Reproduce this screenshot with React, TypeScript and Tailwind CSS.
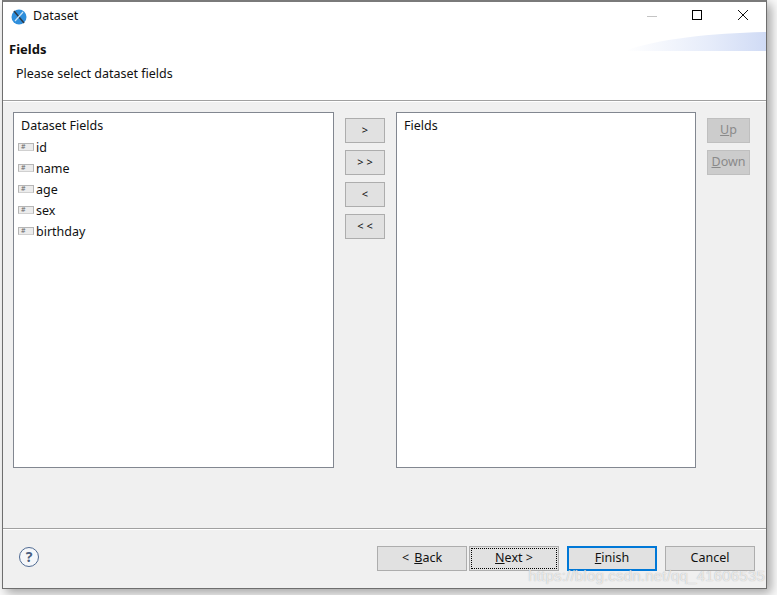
const font = { fontFamily: '"Noto Sans", "Open Sans", sans-serif' }

function Btn({ children, className = '' }: { children: React.ReactNode; className?: string }) {
  return (
    <div className={`flex items-center justify-center border border-[#adadad] bg-[#e1e1e1] text-[#111] ${className}`}>
      {children}
    </div>
  )
}

function FieldIcon() {
  return (
    <div className="h-[8px] w-[16px] shrink-0 border border-[#b5b5b5] bg-[#ececec] border-b-[#d0d0d0] text-[7px] leading-[6px] pl-[2px] text-[#666] mt-[-4px]">
      #
    </div>
  )
}

const fields = ['id', 'name', 'age', 'sex', 'birthday']

export default function App() {
  return (
    <div className="h-[595px] w-[777px] overflow-hidden bg-[#fafafa] text-[13px]" style={font}>
      <div className="ml-[2px] flex h-[589px] w-[765px] flex-col border border-t-2 border-[#6e6e6e] border-t-[#7a7a7a] bg-[#f0f0f0] text-[#111] shadow-[4px_4px_10px_rgba(0,0,0,0.35)]">
        {/* title bar */}
        <div className="relative h-[98px] shrink-0 bg-white">
          <div className="flex h-[29px] items-center pl-[8px]">
            <svg width="16" height="16" viewBox="0 0 16 16" className="shrink-0">
              <circle cx="8" cy="8" r="7.5" fill="#2f8fdc" />
              <path d="M3 2 L13 14" stroke="#2b3a4a" strokeWidth="1.6" />
              <path d="M12 3 L4 12" stroke="#cfe6f7" strokeWidth="1.2" />
            </svg>
            <span className="ml-[6px] text-[12.5px]">Dataset</span>
          </div>
          <div className="pl-[6px] pt-[9px] text-[13px] font-bold leading-[18px]">Fields</div>
          <div className="pl-[13px] pt-[7px] text-[12.5px] leading-[18px]">Please select dataset fields</div>

          {/* window buttons */}
          <div className="absolute left-[644px] top-[14px] h-px w-[10px] bg-[#c4c4c4]" />
          <div className="absolute left-[689px] top-[8px] h-[10px] w-[10px] border border-black" />
          <svg className="absolute left-[734px] top-[7px]" width="12" height="12" viewBox="0 0 12 12">
            <path d="M1 1 L11 11 M11 1 L1 11" stroke="#111" strokeWidth="1" />
          </svg>

          {/* banner swoosh */}
          <svg className="absolute right-0 top-[29px]" width="141" height="22" viewBox="0 0 141 22">
            <defs>
              <linearGradient id="swoosh" x1="0" x2="1" y1="0" y2="0">
                <stop offset="0" stopColor="#ffffff" />
                <stop offset="0.6" stopColor="#e6ecfa" />
                <stop offset="1" stopColor="#d0dbf5" />
              </linearGradient>
            </defs>
            <path d="M0 20 C30 8 90 2 141 1 L141 20 Z" fill="url(#swoosh)" />
          </svg>
        </div>

        <div className="h-[2px] shrink-0 border-t border-[#a0a0a0] bg-white" />

        {/* body */}
        <div className="flex flex-1 pl-[10px] pr-[16px] pt-[10px]">
          <div className="h-[356px] w-[321px] shrink-0 border border-[#828790] bg-white pl-[7px] pt-[4px]">
            <div className="text-[12.5px] leading-[18px]">Dataset Fields</div>
            <div className="ml-[-3px] mt-[3px] flex flex-col">
              {fields.map(f => (
                <div key={f} className="flex h-[21px] items-center gap-[2px] text-[12.5px]">
                  <FieldIcon />
                  <span>{f}</span>
                </div>
              ))}
            </div>
          </div>

          <div className="ml-[11px] flex w-[40px] shrink-0 flex-col gap-[7px] pt-[6px] text-[11px]">
            <Btn className="h-[25px]">&gt;</Btn>
            <Btn className="h-[25px]">&gt; &gt;</Btn>
            <Btn className="h-[25px]">&lt;</Btn>
            <Btn className="h-[25px]">&lt; &lt;</Btn>
          </div>

          <div className="ml-[11px] h-[356px] w-[300px] shrink-0 border border-[#828790] bg-white pl-[7px] pt-[4px]">
            <div className="text-[12.5px] leading-[18px]">Fields</div>
          </div>

          <div className="ml-[11px] flex w-[43px] shrink-0 flex-col gap-[7px] pt-[6px] text-[12.5px] text-[#8a8a8a]">
            <Btn className="h-[25px] !border-[#bfbfbf] !bg-[#cccccc] !text-[#8a8a8a]">
              <span><u>U</u>p</span>
            </Btn>
            <Btn className="h-[25px] !border-[#bfbfbf] !bg-[#cccccc] !text-[#8a8a8a]">
              <span><u>D</u>own</span>
            </Btn>
          </div>
        </div>

        <div className="h-[2px] shrink-0 border-t border-[#a0a0a0] bg-white" />

        {/* footer */}
        <div className="relative flex h-[58px] shrink-0 items-start pl-[16px] pt-[16px] text-[12.5px]">
          <div className="mt-[1px] flex h-[20px] w-[20px] items-center justify-center rounded-full border-[1.5px] border-[#4f6a92] bg-[#f5f7fa] text-[14px] font-bold leading-none text-[#4a5f80]">
            ?
          </div>
          <div className="ml-auto mr-[11px] flex">
            <Btn className="h-[25px] w-[90px]">&lt;&nbsp;<span className="ml-[2px]"><u>B</u>ack</span></Btn>
            <Btn className="ml-[2px] h-[25px] w-[90px] outline-1 outline-dotted outline-offset-[-3px] outline-black">
              <span><u>N</u>ext &gt;</span>
            </Btn>
            <Btn className="ml-[8px] h-[25px] w-[90px] !border-2 !border-[#0078d7]">
              <span><u>F</u>inish</span>
            </Btn>
            <Btn className="ml-[8px] h-[25px] w-[90px]">Cancel</Btn>
          </div>
          {/* watermark */}
          <div
            className="absolute bottom-[3px] right-[1px] text-[15px] leading-[18px] tracking-[0.2px] text-white/70"
            style={{ fontFamily: '"Liberation Sans", sans-serif', textShadow: '0 0 1px rgba(120,120,120,0.6)' }}
          >
            https://blog.csdn.net/qq_41606535
          </div>
        </div>
      </div>
    </div>
  )
}
